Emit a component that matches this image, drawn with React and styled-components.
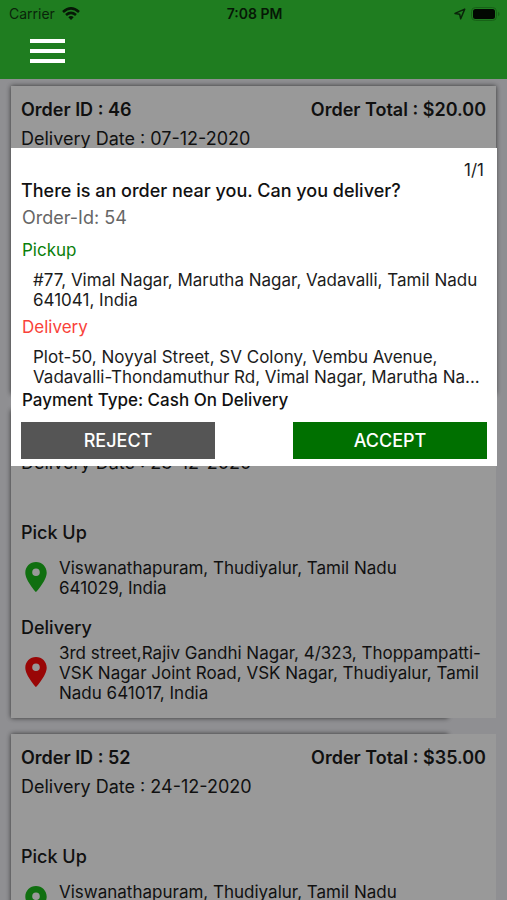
import React from "react";
import styled, { createGlobalStyle } from "styled-components";

const GlobalStyle = createGlobalStyle`
  *, *::before, *::after { box-sizing: border-box; }
  body {
    margin: 0;
    font-family: Inter, "Liberation Sans", sans-serif;
    font-size: 17px;
    line-height: 20px;
    color: #1c1c1c;
  }
  h2, h3, p { margin: 0; font: inherit; }
`;

const Screen = styled.div`
  position: relative;
  display: flex;
  flex-direction: column;
  height: 100vh;
  overflow: hidden;
  background: #efeff4;
`;

const Header = styled.header`
  flex: none;
  height: 79px;
  background: #1f7d20;
`;

const StatusBar = styled.div`
  display: grid;
  grid-template-columns: 1fr auto 1fr;
  align-items: center;
  height: 27px;
  padding: 0 7px 0 9px;
  font-size: 14px;
  color: #0a240a;
`;

const StatusGroup = styled.div`
  display: flex;
  align-items: center;
  gap: ${(p) => (p.$end ? "5px" : "7px")};
  justify-content: ${(p) => (p.$end ? "flex-end" : "flex-start")};
`;

const Clock = styled.time`
  font-weight: 600;
  color: #061806;
`;

const MenuButton = styled.button`
  display: block;
  margin: 6px 0 0 24px;
  padding: 6px;
  border: 0;
  background: none;
  cursor: pointer;
  svg { display: block; }
`;

const OrderList = styled.main`
  display: flex;
  flex-direction: column;
  flex: 1;
  min-height: 0;
  gap: 16px;
  padding: 7px 11px;
  overflow-y: auto;
  scrollbar-width: none;
`;

const Card = styled.article`
  position: relative;
  z-index: 0;
  flex: none;
  padding: 12px 10px 15px;

  &::before,
  &::after {
    content: "";
    position: absolute;
    inset: 0;
    z-index: -1;
    background: #fff;
  }
  &::before {
    right: ${(p) => (p.$shortShadow ? "10%" : "0")};
    box-shadow: 0 0 5px rgba(0, 0, 0, 0.65);
  }
`;

const CardTop = styled.div`
  display: flex;
  justify-content: space-between;
  line-height: 24px;
  font-size: 18px;
  font-weight: 600;
`;

const CardDate = styled.p`
  margin: 5px 0 46px;
  line-height: 24px;
  font-size: 18px;
`;

const StopTitle = styled.h3`
  line-height: 24px;
  font-size: 18px;
  font-weight: 500;
`;

const Stop = styled.section`
  & + & { margin-top: 8px; }
`;

const StopRow = styled.div`
  display: flex;
  align-items: center;
  gap: 12px;
  min-height: 60px;
  margin-top: 3px;
  padding-left: 4px;
  svg { flex: none; }
`;

const Overlay = styled.div`
  position: absolute;
  inset: 79px 0 0;
  padding: 69px 10px 0 11px;
  background: rgba(0, 0, 0, 0.4);
`;

const Dialog = styled.section`
  display: flex;
  flex-direction: column;
  padding: 12px 10px 7px;
  background: #fff;
`;

const Counter = styled.span`
  align-self: flex-end;
  margin: 0 3px 1px 0;
`;

const Question = styled.h2`
  font-size: 18px;
  font-weight: 500;
  color: #111;
`;

const OrderNumber = styled.p`
  margin: 7px 0 12px;
  padding-left: 1px;
  font-size: 18px;
  color: #666;
`;

const PlaceLabel = styled.h3`
  padding-left: 1px;
  color: ${(p) => p.$color};
`;

const PlaceAddress = styled.p`
  margin: 10px 4px ${(p) => (p.$last ? "3px" : "7px")} 12px;
`;

const Payment = styled.p`
  padding-left: 1px;
  font-weight: 500;
  color: #111;
`;

const Actions = styled.div`
  display: flex;
  gap: 78px;
  margin-top: 12px;
`;

const ActionButton = styled.button`
  flex: 1;
  height: 37px;
  border: 0;
  background: ${(p) => (p.$primary ? "#007000" : "#555")};
  color: #fff;
  font-family: inherit;
  font-size: 18px;
  font-weight: 500;
  cursor: pointer;
`;

function WifiIcon() {
  return (
    <svg width="18" height="13" viewBox="0 0 18 13" aria-hidden="true">
      <g fill="none" stroke="#061806" strokeWidth="2.6">
        <path d="M1 4.9Q9-2.1 17 4.9" />
        <path d="M4 8Q9 3.8 14 8" />
      </g>
      <path d="M6.3 10.2Q9 8 11.7 10.2L9 13Z" fill="#061806" />
    </svg>
  );
}

function LocationIcon() {
  return (
    <svg width="12" height="12" viewBox="0 0 12 12" aria-hidden="true">
      <path
        d="M10.7 1.1L1 5.4L5.7 6.3L6.7 10.8Z"
        fill="none"
        stroke="#0a240a"
        strokeWidth="1.5"
        strokeLinejoin="round"
      />
    </svg>
  );
}

function BatteryIcon() {
  return (
    <svg width="29" height="14" viewBox="0 0 29 14" aria-hidden="true">
      <rect x="0.5" y="0.5" width="25" height="13" rx="4" fill="none" stroke="#176217" />
      <rect x="2" y="2" width="22" height="10" rx="2.5" fill="#020802" />
      <path d="M27 4.8Q28.6 5.5 28.6 7T27 9.2Z" fill="#176217" />
    </svg>
  );
}

function MenuIcon() {
  return (
    <svg width="35" height="24" viewBox="0 0 35 24" fill="#fff" aria-hidden="true">
      <rect width="35" height="4" />
      <rect y="10" width="35" height="4" />
      <rect y="20" width="35" height="4" />
    </svg>
  );
}

function PinIcon({ color }) {
  return (
    <svg width="22" height="32" viewBox="0 0 22 32" aria-hidden="true">
      <path
        fill={color}
        fillRule="evenodd"
        d="M11 0C5 0 .3 4.7.3 10.7.3 18.5 11 30 11 30S21.7 18.5 21.7 10.7C21.7 4.7 17 0 11 0ZM11 6.4a3.8 3.8 0 1 1 0 7.6 3.8 3.8 0 0 1 0-7.6Z"
      />
    </svg>
  );
}

const pickupAddress = "Viswanathapuram, Thudiyalur, Tamil Nadu 641029,\u00a0India";
const deliveryAddress =
  "3rd street,Rajiv Gandhi Nagar, 4/323, Thoppampatti-VSK Nagar Joint Road, VSK Nagar, Thudiyalur, Tamil Nadu 641017, India";

const orders = [
  { id: 46, total: "$20.00", date: "07-12-2020" },
  { id: 50, total: "$25.00", date: "23-12-2020", shortShadow: true },
  { id: 52, total: "$35.00", date: "24-12-2020", shortShadow: true },
];

function OrderCard({ order }) {
  return (
    <Card $shortShadow={order.shortShadow}>
      <CardTop>
        <span>Order ID : {order.id}</span>
        <span>Order Total : {order.total}</span>
      </CardTop>
      <CardDate>Delivery Date : {order.date}</CardDate>
      <Stop>
        <StopTitle>Pick Up</StopTitle>
        <StopRow>
          <PinIcon color="#1cba1c" />
          <p>{pickupAddress}</p>
        </StopRow>
      </Stop>
      <Stop>
        <StopTitle>Delivery</StopTitle>
        <StopRow>
          <PinIcon color="#ff0a0a" />
          <p>{deliveryAddress}</p>
        </StopRow>
      </Stop>
    </Card>
  );
}

export default function App() {
  return (
    <Screen>
      <GlobalStyle />
      <Header>
        <StatusBar>
          <StatusGroup>
            <span>Carrier</span>
            <WifiIcon />
          </StatusGroup>
          <Clock>7:08 PM</Clock>
          <StatusGroup $end>
            <LocationIcon />
            <BatteryIcon />
          </StatusGroup>
        </StatusBar>
        <MenuButton aria-label="Open menu">
          <MenuIcon />
        </MenuButton>
      </Header>
      <OrderList>
        {orders.map((order) => (
          <OrderCard key={order.id} order={order} />
        ))}
      </OrderList>
      <Overlay>
        <Dialog role="dialog" aria-modal="true" aria-labelledby="question">
          <Counter>1/1</Counter>
          <Question id="question">There is an order near you. Can you deliver?</Question>
          <OrderNumber>Order-Id: 54</OrderNumber>
          <PlaceLabel $color="#0a800a">Pickup</PlaceLabel>
          <PlaceAddress>
            {"#77, Vimal Nagar, Marutha Nagar, Vadavalli, Tamil Nadu 641041,\u00a0India"}
          </PlaceAddress>
          <PlaceLabel $color="#f9423a">Delivery</PlaceLabel>
          <PlaceAddress $last>
            Plot-50, Noyyal Street, SV Colony, Vembu Avenue, Vadavalli-Thondamuthur Rd,
            Vimal Nagar, Marutha Na...
          </PlaceAddress>
          <Payment>Payment Type: Cash On Delivery</Payment>
          <Actions>
            <ActionButton>REJECT</ActionButton>
            <ActionButton $primary>ACCEPT</ActionButton>
          </Actions>
        </Dialog>
      </Overlay>
    </Screen>
  );
}
